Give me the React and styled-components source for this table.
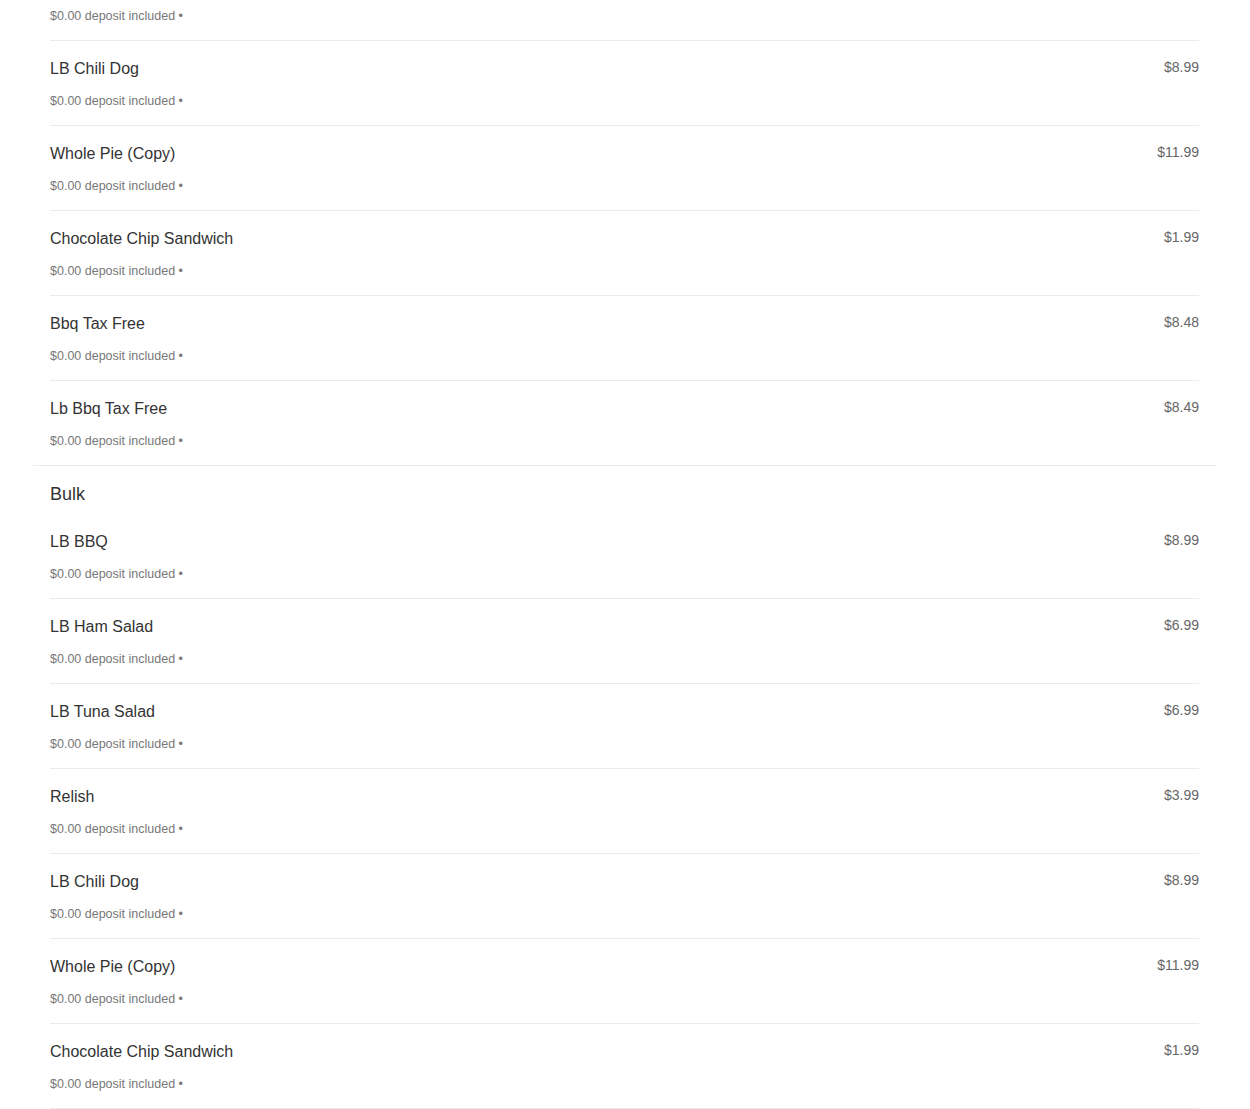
import React from 'react'
import styled, {createGlobalStyle} from 'styled-components'

const Global = createGlobalStyle`
  html, body {
    margin: 0;
    padding: 0;
    background: #fff;
    font-family: "Liberation Sans", Arial, sans-serif;
    overflow: hidden;
  }
`

const Page = styled.div`
  padding: 0 34px 0 33px;
`

const Section = styled.section`
  padding: 0 17px;
  border-bottom: ${props => props.last ? "none" : "1px solid #ebebeb"};
`

const SectionTitle = styled.h2`
  margin: 0;
  padding: 17px 0 9px;
  font-size: 18px;
  line-height: 22px;
  font-weight: normal;
  color: #333;
`

const Row = styled.div`
  display: flex;
  justify-content: space-between;
  align-items: flex-start;
  padding: ${props => props.tail ? "9px 0 17px" : "18px 0 17px"};
  border-bottom: ${props => props.noLine ? "none" : "1px solid #ebebeb"};
`

const Info = styled.div`
  display: flex;
  flex-direction: column;
  gap: 15px;
`

const Name = styled.div`
  font-size: 16px;
  line-height: 20px;
  color: #333;
`

const Deposit = styled.div`
  font-size: 12.5px;
  line-height: 14px;
  color: #777;
`

const Price = styled.div`
  font-size: 14px;
  line-height: 20px;
  color: #666;
  margin-top: -2px;
`

const first = [
    {name: "LB Chili Dog", price: "$8.99"},
    {name: "Whole Pie (Copy)", price: "$11.99"},
    {name: "Chocolate Chip Sandwich", price: "$1.99"},
    {name: "Bbq Tax Free", price: "$8.48"},
    {name: "Lb Bbq Tax Free", price: "$8.49"},
]

const bulk = [
    {name: "LB BBQ", price: "$8.99"},
    {name: "LB Ham Salad", price: "$6.99"},
    {name: "LB Tuna Salad", price: "$6.99"},
    {name: "Relish", price: "$3.99"},
    {name: "LB Chili Dog", price: "$8.99"},
    {name: "Whole Pie (Copy)", price: "$11.99"},
    {name: "Chocolate Chip Sandwich", price: "$1.99"},
]

const deposit = "$0.00 deposit included •"

const ItemRow = ({item, noLine}) => (
    <Row noLine={noLine}>
        <Info>
            <Name>{item.name}</Name>
            <Deposit>{deposit}</Deposit>
        </Info>
        <Price>{item.price}</Price>
    </Row>
)

const App = () => {
    return (
        <>
            <Global/>
            <Page>
                <Section>
                    {/* tail of the row scrolled above the top */}
                    <Row tail>
                        <Deposit>{deposit}</Deposit>
                    </Row>
                    {first.map((item, i) => (
                        <ItemRow key={i} item={item} noLine={i === first.length - 1}/>
                    ))}
                </Section>
                <Section last>
                    <SectionTitle>Bulk</SectionTitle>
                    {bulk.map((item, i) => (
                        <ItemRow key={i} item={item}/>
                    ))}
                </Section>
            </Page>
        </>
    )
}

export default App
